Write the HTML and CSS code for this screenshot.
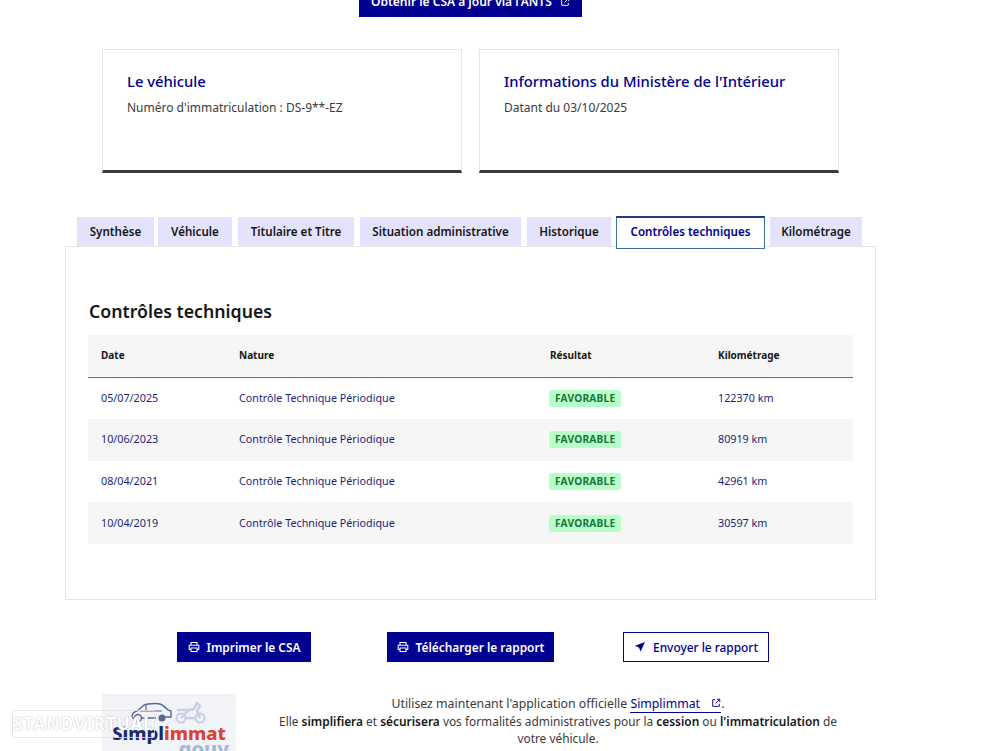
FILE: index.html
```html
<!DOCTYPE html>
<html lang="fr">
<head>
<meta charset="utf-8">
<title>Contrôles techniques</title>
<link rel="stylesheet" href="styles.css">
</head>
<body>
<div class="page">
  <div class="top-action">
    <a class="btn btn-primary btn-ants">Obtenir le CSA à jour via l'ANTS
      <svg class="ext" viewBox="0 0 12 12"><path d="M5 2H2v8h8V7M7 1.5h3.5V5M10.5 1.5 5.5 6.5" fill="none" stroke="currentColor" stroke-width="1.1"/></svg>
    </a>
  </div>
  <div class="cards">
    <section class="card">
      <h2 class="card-title">Le véhicule</h2>
      <p class="card-text">Numéro d'immatriculation : DS-9**-EZ</p>
    </section>
    <section class="card">
      <h2 class="card-title">Informations du Ministère de l'Intérieur</h2>
      <p class="card-text">Datant du 03/10/2025</p>
    </section>
  </div>
  <div class="tabs-wrap">
    <div class="tabs">
      <span class="tab t1">Synthèse</span>
      <span class="tab t2">Véhicule</span>
      <span class="tab t3">Titulaire et Titre</span>
      <span class="tab t4">Situation administrative</span>
      <span class="tab t5">Historique</span>
      <span class="tab tab-active">Contrôles techniques</span>
      <span class="tab t7">Kilométrage</span>
    </div>
    <div class="panel">
      <h3 class="panel-title">Contrôles techniques</h3>
      <table class="table">
        <thead>
          <tr><th class="c1">Date</th><th class="c2">Nature</th><th class="c3">Résultat</th><th class="c4">Kilométrage</th></tr>
        </thead>
        <tbody>
          <tr><td class="c1">05/07/2025</td><td>Contrôle Technique Périodique</td><td><span class="badge">FAVORABLE</span></td><td class="c4">122370 km</td></tr>
          <tr><td class="c1">10/06/2023</td><td>Contrôle Technique Périodique</td><td><span class="badge">FAVORABLE</span></td><td class="c4">80919 km</td></tr>
          <tr><td class="c1">08/04/2021</td><td>Contrôle Technique Périodique</td><td><span class="badge">FAVORABLE</span></td><td class="c4">42961 km</td></tr>
          <tr><td class="c1">10/04/2019</td><td>Contrôle Technique Périodique</td><td><span class="badge">FAVORABLE</span></td><td class="c4">30597 km</td></tr>
        </tbody>
      </table>
    </div>
  </div>
  <div class="actions">
    <a class="btn btn-primary btn-print">
      <svg class="ico" viewBox="0 0 12 12"><path d="M3 4V1.5h6V4M3 8.5H1.2V4.2h9.6v4.3H9M3 7h6v3.5H3z" fill="none" stroke="currentColor" stroke-width="1.1"/></svg>
      Imprimer le CSA</a>
    <a class="btn btn-primary btn-dl">
      <svg class="ico" viewBox="0 0 12 12"><path d="M3 4V1.5h6V4M3 8.5H1.2V4.2h9.6v4.3H9M3 7h6v3.5H3z" fill="none" stroke="currentColor" stroke-width="1.1"/></svg>
      Télécharger le rapport</a>
    <a class="btn btn-outline">
      <svg class="ico" viewBox="0 0 12 12"><path d="M11 1 1 4.8l4 1.6 1.6 4.2z" fill="currentColor"/></svg>
      Envoyer le rapport</a>
  </div>
  <div class="promo">
    <div class="logo">
      <svg class="logo-art" viewBox="0 0 76 28">
        <path d="M2 19c0-3 1-5 5-6l7-6c2-1 12-2 16-1 3 1 6 4 8 6l3 1v6h-6M26 20H12M6 20H2" fill="none" stroke="#5b6a92" stroke-width="1.4"/>
        <circle cx="8" cy="20" r="3.5" fill="none" stroke="#5b6a92" stroke-width="1.4"/>
        <circle cx="32" cy="20" r="3.5" fill="#5b6a92"/>
        <path d="M16 7v6M10 13h22" fill="none" stroke="#5b6a92" stroke-width="1.2"/>
        <circle cx="51" cy="20" r="4.5" fill="none" stroke="#c9cfe2" stroke-width="2"/>
        <circle cx="70" cy="20" r="4.5" fill="none" stroke="#c9cfe2" stroke-width="2"/>
        <path d="M51 20l8-8 5-1 3-6 3 3-3 5 3 7M47 12h12M55 20h10" fill="none" stroke="#c9cfe2" stroke-width="2.4"/>
      </svg>
      <div class="logo-name"><span class="navy">Simpl</span><span class="red">immat</span></div>
      <div class="logo-gouv">.gouv</div>
    </div>
    <div class="promo-text">
      <p class="promo-first">Utilisez maintenant l'application officielle <a class="link">Simplimmat <svg class="ext-s" viewBox="0 0 12 12"><path d="M5 2H2v8h8V7M7 1.5h3.5V5M10.5 1.5 5.5 6.5" fill="none" stroke="currentColor" stroke-width="1.1"/></svg></a>.</p>
      <p>Elle <b>simplifiera</b> et <b>sécurisera</b> vos formalités administratives pour la <b>cession</b> ou <b>l'immatriculation</b> de votre véhicule.</p>
    </div>
  </div>
  <div class="watermark">STANDVIRTUAL</div>
</div>
</body>
</html>
```
FILE: styles.css
```css
* { box-sizing: border-box; }
html, body { margin: 0; padding: 0; height: 751px; overflow: hidden; background: #fff; }
body { font-family: "Noto Sans", "Liberation Sans", sans-serif; color: #3a3a3a; }
.page { position: relative; width: 1000px; height: 751px; overflow: hidden; }
.top-action { display: flex; justify-content: flex-start; padding-left: 359px; margin-top: -13px; }
.btn { display: inline-flex; align-items: center; height: 30px; font-size: 12px; font-weight: 600; white-space: nowrap; }
.btn-primary { background: #000091; color: #fff; }
.btn-ants { width: 223px; padding: 0 0 1px 12px; }
.ext { width: 10px; height: 10px; margin-left: 8px; }
.cards { display: flex; gap: 17px; margin: 32px 0 0 102px; }
.card { width: 360px; height: 124px; border: 1px solid #e5e5e5; border-bottom: 3px solid #3a3a3a; padding: 20px 24px 0; }
.card-title { margin: 0; font-size: 14.8px; line-height: 22px; font-weight: 500; color: #000091; white-space: nowrap; }
.card-text { margin: 6px 0 0; font-size: 12px; line-height: 20px; color: #3a3a3a; }
.tabs-wrap { margin: 44px 0 0 65px; width: 811px; }
.tabs { display: flex; padding-left: 12px; height: 29px; position: relative; z-index: 1; }
.tab { background: #e3e3fd; color: #161616; font-size: 11.6px; font-weight: 600; height: 29px; line-height: 29px; text-align: center; flex: none; }
.t1 { width: 77px; margin-right: 4px; }
.t2 { width: 74px; margin-right: 6px; }
.t3 { width: 116px; margin-right: 6px; }
.t4 { width: 161px; margin-right: 6px; }
.t5 { width: 84px; margin-right: 5px; }
.tab-active { width: 149px; height: 33px; margin-top: -1px; line-height: 27px; background: #fff; color: #000091; border: 1px solid #3f6f9f; border-top: 2px solid #1f3f80; margin-right: 5px; }
.t7 { width: 92px; }
.panel { border: 1px solid #e5e5e5; height: 354px; padding: 51px 22px 0; }
.panel-title { margin: 0 0 11px 1px; font-size: 17.7px; line-height: 26px; font-weight: 600; color: #161616; }
.table { width: 765px; border-collapse: collapse; table-layout: fixed; font-size: 10.75px; }
.table th { height: 42px; background: #f6f6f6; border-bottom: 1px solid #6e6e6e; text-align: left; font-size: 10px; font-weight: 700; color: #161616; padding: 0 0 1px 12px; }
.c1 { width: 139px; } .c2 { width: 311px; } .c3 { width: 167px; } .c4 { width: 148px; }
.table td { height: 41.75px; padding: 0 0 1px 12px; color: #1e1e78; }
.table th.c1, .table td.c1, .table th.c4, .table td.c4 { padding-left: 13px; }
.table tbody tr:nth-child(even) td { background: #f6f6f6; }
.badge { display: inline-block; height: 17px; line-height: 17px; padding: 0 6px; background: #b8fec9; color: #18753c; font-size: 10.2px; font-weight: 700; border-radius: 3px; margin: 1px 0 0 -1px; letter-spacing: .2px; }
.actions { display: flex; margin: 32px 0 0 177px; }
.actions .btn { justify-content: center; font-size: 11.9px; }
.ico { width: 12px; height: 12px; margin-right: 7px; flex: none; }
.btn-print { width: 134px; }
.btn-dl { width: 167px; margin-left: 76px; }
.btn-outline { width: 146px; margin-left: 69px; border: 1px solid #000091; color: #000091; font-weight: 500; }
.promo { display: flex; margin: 32px 0 0 102px; align-items: flex-start; }
.logo { width: 134px; height: 80px; background: #f1f3f7; text-align: center; flex: none; padding-top: 4px; overflow: hidden; }
.logo-art { display: block; width: 76px; height: 28px; margin: 0 0 0 28px; }
.logo-name { font-size: 18.5px; line-height: 20px; font-weight: 800; margin-top: -3px; }
.navy { color: #1a2a6c; } .red { color: #d9423a; }
.logo-gouv { font-size: 20px; line-height: 18px; font-weight: 800; color: #a9b8d4; padding-left: 71px; margin-top: -3px; text-align: left; }
.promo-text { width: 570px; margin-left: 37px; padding-top: 1px; text-align: center; font-size: 11.9px; line-height: 17.5px; color: #3a3a3a; }
.promo-text p { margin: 0; }
.promo-text .promo-first { font-size: 12.3px; }
.promo-text b { font-weight: 600; color: #161616; }
.link { color: #000091; border-bottom: 1px solid #000091; }
.ext-s { width: 10px; height: 10px; margin-left: 8px; }
.watermark { position: absolute; left: 12px; top: 710px; width: 143px; height: 28px; line-height: 25px; text-align: center; font-size: 17px; letter-spacing: 1px; color: #fff; font-weight: 700; text-shadow: 0 0 1.5px #a8a8a8; border: 1px solid rgba(225,225,225,.8); border-radius: 2px; white-space: nowrap; overflow: hidden; }
```
